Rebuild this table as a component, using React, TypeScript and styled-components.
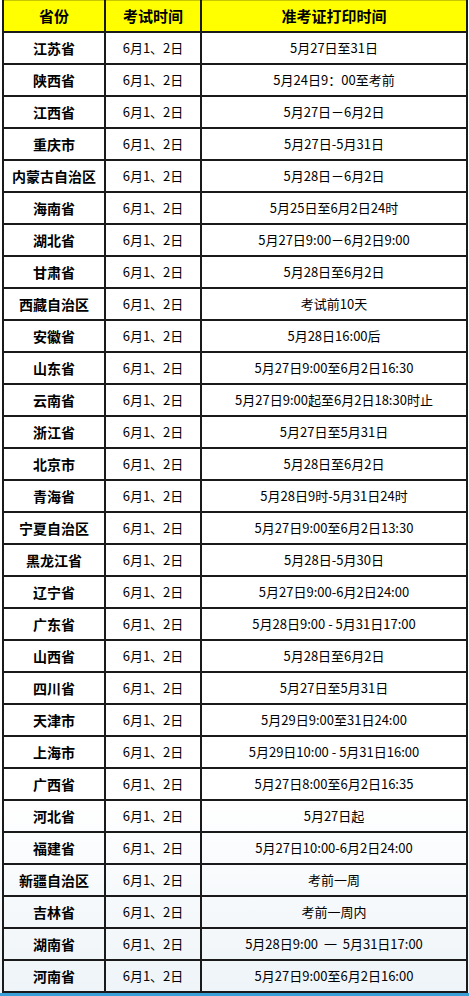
import * as React from 'react';
import styled, { createGlobalStyle } from 'styled-components';

const GlobalStyle = createGlobalStyle`
  html, body {
    margin: 0;
    padding: 0;
    background: #ffffff;
  }
  * {
    box-sizing: border-box;
  }
`;

const Page = styled.div`
  width: 469px;
  height: 996px;
  display: flex;
  flex-direction: column;
  background: linear-gradient(#ffffff 0%, #ffffff 80%, #eef4f8 100%);
  font-family: 'Noto Sans CJK SC', 'Noto Sans', sans-serif;
  color: #000;
  overflow: hidden;
`;

const TableWrap = styled.div`
  padding: 0 3px 0 2px;
  flex: 1;
`;

const Table = styled.table`
  width: 464px;
  border-collapse: collapse;
  table-layout: fixed;
`;

const HeadCell = styled.th<{ w: number }>`
  width: ${p => p.w}px;
  height: 31px;
  padding: 0;
  background: #ffff00;
  border: 2px solid #1a1a1a;
  border-top: 1px solid #c8c800;
  font-size: 15px;
  font-weight: 700;
  text-align: center;
  vertical-align: middle;
  line-height: 1;
`;

const Cell = styled.td<{ bold?: boolean }>`
  height: 32px;
  padding: 0;
  border: 2px solid #1a1a1a;
  text-align: center;
  vertical-align: middle;
  white-space: pre;
  font-size: ${p => (p.bold ? '14px' : '13px')};
  font-weight: ${p => (p.bold ? 700 : 400)};
  line-height: 1;
  background: transparent;
`;

const BottomBar = styled.div`
  height: 5px;
  background: #3b9fd8;
`;

const rows: [string, string][] = [
  ['江苏省', '5月27日至31日'],
  ['陕西省', '5月24日9：00至考前'],
  ['江西省', '5月27日－6月2日'],
  ['重庆市', '5月27日-5月31日'],
  ['内蒙古自治区', '5月28日－6月2日'],
  ['海南省', '5月25日至6月2日24时'],
  ['湖北省', '5月27日9:00－6月2日9:00'],
  ['甘肃省', '5月28日至6月2日'],
  ['西藏自治区', '考试前10天'],
  ['安徽省', '5月28日16:00后'],
  ['山东省', '5月27日9:00至6月2日16:30'],
  ['云南省', '5月27日9:00起至6月2日18:30时止'],
  ['浙江省', '5月27日至5月31日'],
  ['北京市', '5月28日至6月2日'],
  ['青海省', '5月28日9时-5月31日24时'],
  ['宁夏自治区', '5月27日9:00至6月2日13:30'],
  ['黑龙江省', '5月28日-5月30日'],
  ['辽宁省', '5月27日9:00-6月2日24:00'],
  ['广东省', '5月28日9:00 - 5月31日17:00'],
  ['山西省', '5月28日至6月2日'],
  ['四川省', '5月27日至5月31日'],
  ['天津市', '5月29日9:00至31日24:00'],
  ['上海市', '5月29日10:00 - 5月31日16:00'],
  ['广西省', '5月27日8:00至6月2日16:35'],
  ['河北省', '5月27日起'],
  ['福建省', '5月27日10:00-6月2日24:00'],
  ['新疆自治区', '考前一周'],
  ['吉林省', '考前一周内'],
  ['湖南省', '5月28日9:00  一  5月31日17:00'],
  ['河南省', '5月27日9:00至6月2日16:00'],
];

export default function App() {
  return (
    <Page>
      <GlobalStyle />
      <TableWrap>
        <Table>
          <thead>
            <tr>
              <HeadCell w={102}>省份</HeadCell>
              <HeadCell w={96}>考试时间</HeadCell>
              <HeadCell w={266}>准考证打印时间</HeadCell>
            </tr>
          </thead>
          <tbody>
            {rows.map(([prov, time]) => (
              <tr key={prov}>
                <Cell bold>{prov}</Cell>
                <Cell>6月1、2日</Cell>
                <Cell>{time}</Cell>
              </tr>
            ))}
          </tbody>
        </Table>
      </TableWrap>
      <BottomBar />
    </Page>
  );
}
